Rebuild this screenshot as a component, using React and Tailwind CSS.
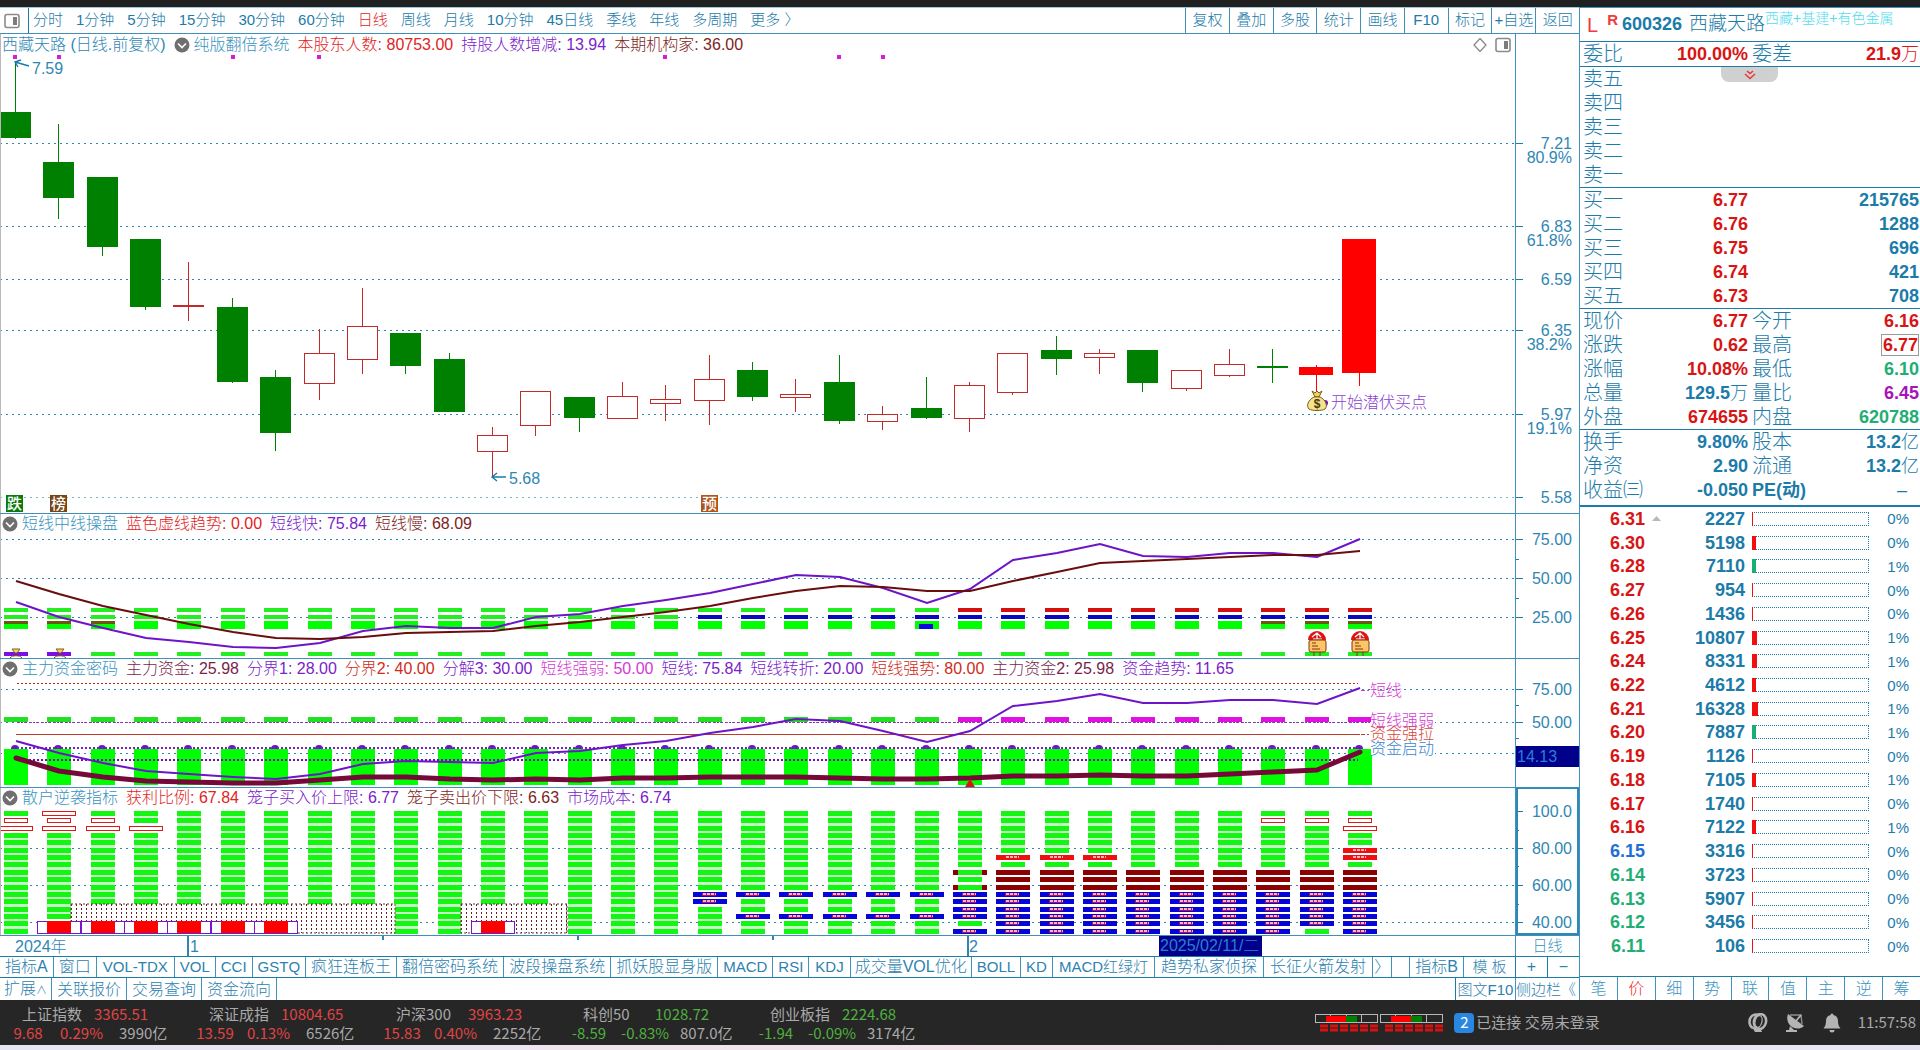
import React from "react";

const STEP = 43.36;
const cx = (i) => Math.round(15 + i * STEP);

const G = "#008000";
const R = "#ff0000";
const HOLLOW = "#c42a2a";
const AXIS = "#1b7ba9";

/* kind, high, body top, body bottom, low */
const CANDLES = [
  ["g", 63, 112, 138, 139],
  ["g", 124, 162, 198, 219],
  ["g", 177, 177, 247, 256],
  ["g", 239, 239, 307, 310],
  ["h", 262, 305, 307, 321],
  ["g", 298, 307, 382, 383],
  ["g", 370, 377, 433, 451],
  ["h", 329, 353, 383, 400],
  ["h", 288, 326, 359, 374],
  ["g", 333, 333, 366, 374],
  ["g", 353, 359, 412, 412],
  ["h", 427, 435, 451, 477],
  ["h", 391, 391, 425, 436],
  ["g", 397, 397, 418, 432],
  ["h", 382, 396, 418, 418],
  ["h", 385, 399, 403, 421],
  ["h", 355, 379, 400, 425],
  ["g", 362, 370, 397, 401],
  ["h", 379, 394, 397, 412],
  ["g", 355, 382, 421, 424],
  ["h", 406, 414, 421, 430],
  ["g", 377, 408, 418, 419],
  ["h", 382, 385, 418, 432],
  ["h", 353, 353, 392, 395],
  ["g", 336, 350, 359, 375],
  ["h", 349, 353, 357, 374],
  ["g", 350, 350, 383, 392],
  ["h", 370, 370, 388, 391],
  ["h", 349, 364, 375, 377],
  ["g", 349, 366, 368, 383],
  ["r", 365, 367, 375, 392],
  ["r", 239, 239, 373, 386],
];

const FAST = [602, 617, 628, 638, 642, 647, 648, 643, 631, 626, 628, 628, 617, 614, 606, 600, 593, 584, 575, 577, 588, 603, 589, 560, 553, 544, 556, 557, 553, 553, 557, 539];
const SLOW = [581, 594, 606, 615, 624, 632, 638, 639, 637, 633, 632, 631, 626, 622, 617, 612, 606, 598, 591, 586, 587, 591, 591, 581, 572, 563, 561, 559, 557, 555, 555, 551];
const SHORT = [741, 753, 763, 771, 774, 777, 779, 774, 764, 761, 762, 763, 753, 751, 745, 741, 733, 727, 719, 721, 731, 742, 731, 706, 701, 694, 703, 703, 700, 700, 704, 688];
const FUND = [758, 771, 777, 781, 782, 783, 783, 780, 777, 777, 779, 780, 779, 780, 778, 778, 777, 777, 777, 778, 779, 779, 778, 776, 776, 775, 776, 776, 774, 772, 770, 752];

const line = (ys) => ys.map((y, i) => `${cx(i) + 1},${y}`).join(" ");
const all = CANDLES.map((_, i) => i);

function Grid({ ys, pale }) {
  return ys.map((y) => (
    <line key={y} x1="0" x2="100%" y1={y} y2={y} stroke={y === pale ? "#7fb5c9" : "#2f86b3"} strokeWidth="1" strokeDasharray="2 4" shapeRendering="crispEdges" transform="translate(0 0.5)" />
  ));
}

function Header({ title, items, prefix, children }) {
  return (
    <div className={`flex h-5 shrink-0 items-center gap-2 whitespace-nowrap text-base leading-5 ${prefix ? "pt-0.5" : ""}`}>
      {prefix ? <span className="ml-px">{prefix}</span> : null}
      <button aria-label={`${title} 菜单`} className={prefix ? "-mr-1 flex" : "-mr-1 flex pl-px"}>
        <svg width="16" height="16" viewBox="0 0 16 16">
          <circle cx="8" cy="8" r="7.5" fill="#6f6f6f" />
          <path d="M4 6.5 L8 10.5 L12 6.5" fill="none" stroke="#fff" strokeWidth="1.6" />
        </svg>
      </button>
      <span className="text-[#3a93bd]">{title}</span>
      {items.map(([t, v, c]) => (
        <span key={t} className={c}>{t}: {v}</span>
      ))}
      {children}
    </div>
  );
}

function Axis({ y0, ticks, minor = [], children }) {
  return (
    <svg className="h-full w-16 shrink-0 border-l border-[#3f93bd]" aria-hidden="true">
      <g transform={`translate(0 ${-y0})`} fill={AXIS} fontSize="16">
        {ticks.map(([y, t, p]) => (
          <g key={y}>
            <rect x="0" y={y} width="7" height="1" />
            <text x="56" y={y + 6} textAnchor="end" fill="#2f86b3">{t}</text>
            {p ? <text x="56" y={y + 20} textAnchor="end" fill="#2f86b3">{p}</text> : null}
          </g>
        ))}
        {minor.map((y) => <rect key={y} x="0" y={y} width="3" height="1" />)}
        {children}
      </g>
    </svg>
  );
}

function Pane({ y0, height, head, axis, children }) {
  return (
    <section className={`flex shrink-0 border-b border-[#3f8fb8] ${height}`}>
      <div className="flex min-w-0 flex-1 flex-col overflow-hidden border-l border-[#b9b9b9]">
        {head}
        <svg className="w-full flex-1" role="img" aria-label="chart">
          <g transform={`translate(-1 ${-(y0 + 20)})`}>{children}</g>
        </svg>
      </div>
      {axis}
    </section>
  );
}

function Tag({ x, t, fill }) {
  return (
    <g>
      <rect x={x} y="495" width="17" height="17" fill={fill} />
      <text x={x + 1} y="509" fontSize="15" fill="#fff" className="font-medium">{t}</text>
    </g>
  );
}

function PanelIcon() {
  return (
    <svg width="16" height="16" viewBox="0 0 16 16">
      <rect x="1" y="1.5" width="14" height="13" rx="2" fill="#fff" stroke="#8a8a8a" strokeWidth="1.6" />
      <rect x="9" y="4" width="4" height="8" fill="#7c7c7c" />
    </svg>
  );
}

function MainChart() {
  return (
    <Pane
      y0={34}
      height="h-[480px]"
      head={
        <Header
          prefix={<span className="text-[#2f86b3]">西藏天路 (日线.前复权)</span>}
          title="纯版翻倍系统"
          items={[
            ["本股东人数", "80753.00", "text-[#e02424]"],
            ["持股人数增减", "13.94", "text-[#7a22c9]"],
            ["本期机构家", "36.00", "text-[#7d2323]"],
          ]}
        >
          <span className="ml-auto mr-1 flex items-center gap-2">
            <button aria-label="标注" className="flex">
              <svg width="14" height="14" viewBox="0 0 14 14"><path d="M7 0.5 L13 7 L7 13.5 L1 7 Z" fill="none" stroke="#8a8a8a" strokeWidth="1.3" /></svg>
            </button>
            <button aria-label="侧栏" className="flex"><PanelIcon /></button>
          </span>
        </Header>
      }
      axis={
        <Axis
          y0={34}
          ticks={[[143, "7.21", "80.9%"], [226, "6.83", "61.8%"], [279, "6.59"], [330, "6.35", "38.2%"], [414, "5.97", "19.1%"], [497, "5.58"]]}
        />
      }
    >
      <Grid ys={[143, 226, 279, 330, 414, 497]} pale={497} />
      {[14, 58, 232, 318, 664, 838, 882].map((x) => <rect key={x} x={x - 1} y="55" width="4" height="4" fill="#d81bd8" />)}
      {CANDLES.map(([k, hi, t, b, lo], i) => {
        const x = cx(i);
        const c = k === "g" ? G : k === "r" ? R : HOLLOW;
        const w = k === "r" ? 34 : 31;
        return (
          <g key={i} shapeRendering="crispEdges">
            <rect x={x} y={hi} width="1" height={lo - hi} fill={c} />
            {k === "h" && b - t > 2 ? (
              <rect x={x - 15} y={t} width="30" height={b - t} fill="#fff" stroke={c} strokeWidth="1" />
            ) : (
              <rect x={x - (w >> 1)} y={t} width={w} height={b - t} fill={c} />
            )}
          </g>
        );
      })}
      <g fill="none" stroke="#1b7ba9" strokeWidth="1.4">
        <path d="M29 66 L15 62 M21 60 L15 62 L18 67" />
        <path d="M506 477 H492 M497 473 L492 477 L497 481" />
      </g>
      <text x="32" y="74" fontSize="16" fill="#2f86b3">7.59</text>
      <text x="509" y="484" fontSize="16" fill="#2f86b3">5.68</text>
      <circle cx="1325" cy="403" r="3" fill="#6a12c4" />
      <g stroke="#7a5a16" strokeWidth="1">
        <path d="M1312 391 L1315 393 L1317 391 L1319 393 L1322 391 L1319 397 H1315 Z" fill="#f3d35a" />
        <path d="M1314 397 C1308 400 1306 406 1309 409 C1312 411 1322 411 1325 409 C1328 406 1326 400 1320 397 Z" fill="#f3e48a" />
      </g>
      <text x="1317" y="408" fontSize="12" textAnchor="middle" fill="#4c3608" className="font-bold">$</text>
      <text x="1331" y="408" fontSize="16" fill="#8a3fd0">开始潜伏买点</text>
      <Tag x={6} t="跌" fill="#0b7a0b" />
      <Tag x={50} t="榜" fill="#7a4313" />
      <Tag x={701} t="预" fill="#b0561c" />
    </Pane>
  );
}

function TokenIcon({ x }) {
  return (
    <g>
      <path d={`M${x - 9} 640 A9 9 0 0 1 ${x + 9} 640 Z`} fill="#dd1515" />
      <path d={`M${x - 5} 637 L${x} 633 L${x + 4} 637 M${x - 4} 639 H${x + 5} M${x} 633 V639`} stroke="#fff" strokeWidth="1.2" fill="none" />
      <rect x={x - 8} y="640" width="17" height="12" rx="2" fill="#fdc565" stroke="#7a3b10" strokeWidth="1" />
      <path d={`M${x - 5} 643 H${x - 1} M${x - 5} 646 H${x + 1} M${x - 5} 649 H${x + 3}`} stroke="#7a3b10" strokeWidth="1" />
      <path d={`M${x - 3} 652 V656 M${x + 3} 652 V656`} stroke="#7a3b10" strokeWidth="1" />
    </g>
  );
}

function ShortMidPane() {
  return (
    <Pane
      y0={514}
      height="h-[145px]"
      head={
        <Header
          title="短线中线操盘"
          items={[
            ["蓝色虚线趋势", "0.00", "text-[#e02424]"],
            ["短线快", "75.84", "text-[#7a22c9]"],
            ["短线慢", "68.09", "text-[#7d2323]"],
          ]}
        />
      }
      axis={<Axis y0={514} ticks={[[539, "75.00"], [578, "50.00"], [617, "25.00"]]} minor={[559, 598]} />}
    >
      <Grid ys={[539, 578, 617]} />
      {all.map((i) => {
        const x = cx(i) - 11;
        return (
          <g key={i}>
            <rect x={x} y="608" width="24" height="4" fill={i >= 22 ? "#d61010" : "#22ee22"} />
            <rect x={x} y="615" width="24" height="4" fill={i >= 16 ? "#0808c0" : "#22ee22"} />
            <rect x={x} y="621" width="24" height="8" fill="#00ff00" />
            {i < 3 || i > 28 ? <rect x={x} y="621" width="24" height="3" fill="#6a5a10" /> : null}
            {i === 21 ? <rect x="919" y="624" width="14" height="5" fill="#0808e0" /> : null}
            <rect x={x} y="652" width="24" height="4" fill={i < 2 ? "#7a0fe0" : "#22ee22"} />
          </g>
        );
      })}
      {[16, 60].map((x) => (
        <g key={x} stroke="#8a5a1a" strokeWidth="1" fill="#f3d35a">
          <path d={`M${x - 4} 649 H${x + 4} L${x + 1} 653 H${x - 1} Z`} />
          <path d={`M${x - 6} 658 C${x - 4} 655 ${x + 4} 655 ${x + 6} 658`} fill="none" />
        </g>
      ))}
      <polyline points={line(FAST)} fill="none" stroke="#6d14c8" strokeWidth="2" />
      <polyline points={line(SLOW)} fill="none" stroke="#6a0d0d" strokeWidth="2" />
      <TokenIcon x={1317} />
      <TokenIcon x={1360} />
    </Pane>
  );
}

function FundPane() {
  return (
    <Pane
      y0={659}
      height="h-[129px]"
      head={
        <Header
          title="主力资金密码"
          items={[
            ["主力资金", "25.98", "text-[#7a1f4a]"],
            ["分界1", "28.00", "text-[#7a22c9]"],
            ["分界2", "40.00", "text-[#d02a20]"],
            ["分解3", "30.00", "text-[#7a22c9]"],
            ["短线强弱", "50.00", "text-[#d43ad4]"],
            ["短线", "75.84", "text-[#7a22c9]"],
            ["短线转折", "20.00", "text-[#7a22c9]"],
            ["短线强势", "80.00", "text-[#d02a20]"],
            ["主力资金2", "25.98", "text-[#7a1f4a]"],
            ["资金趋势", "11.65", "text-[#7a22c9]"],
          ]}
        />
      }
      axis={
        <Axis y0={659} ticks={[[689, "75.00"], [722, "50.00"]]} minor={[705, 738]}>
          <rect x="0" y="746" width="64" height="21" fill="#00008b" />
          <text x="1" y="762" fontSize="16" fill="#2a7fd0">14.13</text>
        </Axis>
      }
    >
      <Grid ys={[689, 722, 753]} />
      {all.map((i) => {
        const x = cx(i) - 11;
        return (
          <g key={i}>
            <rect x={x} y="717" width="24" height="5" fill={i >= 22 ? "#e010e0" : "#22e022"} />
            <rect x={x} y="749" width="24" height="36" fill="#00ff00" />
            <path d={`M${x + 7} 749 A4 4 0 0 1 ${x + 15} 749 Z`} fill="#6d14c8" />
          </g>
        );
      })}
      <g strokeWidth="1" strokeDasharray="2 2" shapeRendering="crispEdges">
        <line x1="17" x2="1358" y1="683.5" y2="683.5" stroke="#c02a1a" />
        <line x1="17" x2="1370" y1="722.5" y2="722.5" stroke="#a020b0" />
        <line x1="17" x2="1358" y1="747.5" y2="747.5" stroke="#7a22c9" strokeWidth="2" />
        <line x1="17" x2="1358" y1="759.5" y2="759.5" stroke="#6a10b0" strokeWidth="2" />
      </g>
      <line x1="16" x2="1360" y1="734.5" y2="734.5" stroke="#c0392b" strokeWidth="1" />
      <polyline points={line(SHORT)} fill="none" stroke="#6d14c8" strokeWidth="2" />
      <polyline points={line(FUND)} fill="none" stroke="#750a38" strokeWidth="5" strokeLinejoin="round" strokeLinecap="round" />
      <path d="M965 787 L970 779 L975 787 Z" fill="#e01010" />
      <rect x="1371" y="702" width="64" height="53" fill="#fff" />
      <g strokeDasharray="4 2">
        <line x1="1361" x2="1369" y1="690.5" y2="690.5" stroke="#d43ad4" />
        <line x1="1361" x2="1369" y1="734.5" y2="734.5" stroke="#c0392b" />
      </g>
      <g fontSize="16">
        <text x="1370" y="696" fill="#d43ad4">短线</text>
        <text x="1370" y="726" fill="#d43ad4">短线强弱</text>
        <text x="1370" y="739" fill="#d8443a">资金强拉</text>
        <text x="1370" y="754" fill="#3a86d0">资金启动</text>
      </g>
    </Pane>
  );
}

/* cell codes: g green, n narrow hollow, w wide hollow, b blue, m maroon, s split, r red */
const BASE = "ggggggggggggggggg";
const TALL = "ggggggggmmmbbbbbb";
const STACKS = {
  0: "gnwgggggggggggggg",
  1: "wnwgggggggggggg..",
  2: "gnwgggggggggg....",
  3: "ggwgggggggggg....",
  16: "gggggggggggbbgggg",
  22: "ggggggggsgsbbbbgb",
  29: "gnggggggmmmbbbbbb",
  30: "gnggggggmmmbbbbbg",
  31: "gnwggrrgmmmbbbbbb",
};
const stackOf = (i) => {
  if (STACKS[i]) return STACKS[i];
  if ((i > 3 && i < 9) || i === 11 || i === 12) return "ggggggggggggg....";
  if (i >= 17 && i <= 21) return "gggggggggggbggbgg";
  if (i >= 23 && i <= 25) return "ggggggrgmmmbbbbbb";
  if (i >= 26) return TALL;
  return BASE;
};

function Cell({ code, x, y }) {
  const marks = (
    <path d={`M${x - 6} ${y + 2} H${x + 7}`} stroke="#ffb0b8" strokeWidth="2" strokeDasharray="3 1" />
  );
  if (code === ".") return null;
  if (code === "n") return <rect x={x - 11} y={y} width="23" height="4" fill="#fff" stroke="#e01818" />;
  if (code === "w") return <rect x={x - 16} y={y} width="33" height="4" fill="#fff" stroke="#e01818" />;
  if (code === "m") return <rect x={x - 16} y={y} width="34" height="5" fill="#8b0000" />;
  if (code === "s")
    return (
      <g>
        <rect x={x - 16} y={y} width="34" height="5" fill="#8b0000" />
        <rect x={x - 11} y={y} width="24" height="5" fill="#14f514" />
      </g>
    );
  if (code === "b" || code === "r")
    return (
      <g>
        <rect x={x - 16} y={y} width="34" height="5" fill={code === "b" ? "#0505d8" : "#ee1010"} />
        <rect x={x - 7} y={y + 1} width="14" height="3" fill={code === "b" ? "#b01060" : "#ee1010"} />
        {marks}
      </g>
    );
  return <rect x={x - 11} y={y} width="24" height="5" fill="#14f514" />;
}

function DotField({ x, w }) {
  return <rect x={x} y="904" width={w} height="29" fill="url(#brownDots)" stroke="#6e3434" strokeWidth="1" strokeDasharray="2 2" />;
}

function RetailPane() {
  return (
    <Pane
      y0={788}
      height="h-[148px]"
      head={
        <Header
          title="散户逆袭指标"
          items={[
            ["获利比例", "67.84", "text-[#e02424]"],
            ["笼子买入价上限", "6.77", "text-[#7a22c9]"],
            ["笼子卖出价下限", "6.63", "text-[#7d2323]"],
            ["市场成本", "6.74", "text-[#7a22c9]"],
          ]}
        />
      }
      axis={
        <Axis y0={788} ticks={[[811, "100.0"], [848, "80.00"], [885, "60.00"], [922, "40.00"]]} minor={[830, 866, 904]}>
          <rect x="1" y="788" width="61" height="146" fill="none" stroke="#2c88b5" strokeWidth="2" />
        </Axis>
      }
    >
      <defs>
        <pattern id="brownDots" width="5" height="4" patternUnits="userSpaceOnUse">
          <rect width="5" height="4" fill="#fff" />
          <rect x="1" y="0" width="1" height="2" fill="#5e2020" />
        </pattern>
      </defs>
      <Grid ys={[848, 885, 922]} />
      {all.map((i) => {
        const rows = stackOf(i);
        return (
          <g key={i} shapeRendering="crispEdges">
            {rows.split("").map((c, r) => (
              <g key={r}>
                {c === "g" && rows[r + 1] === "g" ? <rect x={cx(i) - 11} y={Math.round(811 + r * 7.35) + 5} width="24" height="3" fill="#c4f7c4" /> : null}
                <Cell code={c} x={cx(i)} y={Math.round(811 + r * 7.35)} />
              </g>
            ))}
          </g>
        );
      })}
      <DotField x={71} w={324} />
      <DotField x={461} w={106} />
      {[1, 2, 3, 4, 5, 6, 11].map((i) => (
        <g key={i} shapeRendering="crispEdges">
          <rect x={cx(i) - 21} y="921" width="43" height="12" fill="#fff" stroke="#7a14d0" strokeWidth="1" />
          <rect x={cx(i) - 11} y="921" width="24" height="12" fill="#ff0000" />
        </g>
      ))}
    </Pane>
  );
}

const PERIODS = ["分时", "1分钟", "5分钟", "15分钟", "30分钟", "60分钟", "日线", "周线", "月线", "10分钟", "45日线", "季线", "年线", "多周期", "更多 〉"];
const TOOLS = ["复权", "叠加", "多股", "统计", "画线", "F10", "标记", "+自选", "返回"];

function Toolbar() {
  return (
    <nav className="flex h-[27px] shrink-0 items-stretch border-y border-[#3f8fb8] border-t-[#9cc8dd] text-[15px] text-[#1b7ba9]">
      <button aria-label="面板" className="flex w-[29px] items-center border-r border-[#1b7ba9] pl-1"><PanelIcon /></button>
      <div className="flex flex-1 items-center gap-[13px] whitespace-nowrap pl-1">
        {PERIODS.map((p) => (
          <button key={p} className={p === "日线" ? "text-[#e02424]" : ""}>{p}</button>
        ))}
      </div>
      <div className="flex w-[394px]">
        {TOOLS.map((t) => (
          <button key={t} className="flex-1 whitespace-nowrap border-l border-[#3f8fb8]">{t}</button>
        ))}
      </div>
    </nav>
  );
}

function DateRow() {
  return (
    <div className="flex h-[21px] shrink-0 border-b border-[#1b7ba9]">
      <svg className="h-full min-w-0 flex-1" role="img" aria-label="日期">
        <g fill="#2f86b3" fontSize="16">
          <text x="15" y="16">2024年</text>
          <rect x="187" y="0" width="2" height="20" />
          <text x="190" y="16">1</text>
          <rect x="382" y="0" width="2" height="4" />
          <rect x="577" y="0" width="2" height="4" />
          <rect x="772" y="0" width="2" height="4" />
          <rect x="967" y="0" width="2" height="20" />
          <text x="969" y="16">2</text>
          <rect x="1159" y="0" width="103" height="20" fill="#00008b" />
          <text x="1160" y="15" fill="#2a7fd0">2025/02/11/二</text>
        </g>
      </svg>
      <span className="w-16 border-l border-[#3f93bd] text-center text-[15px] leading-5 text-[#3a93bd]">日线</span>
    </div>
  );
}

const LATIN = "px-[5px] text-[15px]";
const LATIN_WIDE = "px-1.5 text-[15px]";
const TABS = [
  ["指标A", "px-[5px]"], ["窗口", "px-[5px]"], ["VOL-TDX", LATIN_WIDE], ["VOL", LATIN], ["CCI", LATIN], ["GSTQ", LATIN],
  ["疯狂连板王", "px-[5px]"], ["翻倍密码系统", "px-[5px]"], ["波段操盘系统", "px-[5px]"], ["抓妖股显身版", "px-[5px]"],
  ["MACD", LATIN], ["RSI", LATIN], ["KDJ", LATIN_WIDE], ["成交量VOL优化", "px-1"], ["BOLL", LATIN], ["KD", LATIN],
  ["MACD红绿灯", LATIN_WIDE], ["趋势私家侦探", "px-1.5"], ["长征火箭发射", "px-1.5"], ["〉", "px-px"],
];
const LINKS = ["关联报价", "交易查询", "资金流向"];

function BottomTabs() {
  return (
    <div className="flex min-h-0 flex-1 flex-col whitespace-nowrap text-base text-[#2c82ae]">
      <div className="flex h-[21px] shrink-0 border-b border-[#1b7ba9] leading-5">
        {TABS.map(([t, pad]) => (
          <button key={t} className={`border-r border-[#3f93bd] ${pad}`}>{t}</button>
        ))}
        <span className="ml-auto" />
        <button className="w-[54px] border-l border-[#3f93bd]">指标B</button>
        <button className="w-[52px] border-l border-[#3f93bd] text-[15px]">模 板</button>
        <button aria-label="放大" className="w-8 border-l border-[#1b7ba9]">+</button>
        <button aria-label="缩小" className="w-8 border-l border-[#1b7ba9]">−</button>
      </div>
      <div className="flex flex-1 leading-[22px]">
        <button className="border-r border-[#3f93bd] px-1">扩展<span className="text-[11px]">∧</span></button>
        {LINKS.map((t) => (
          <button key={t} className="border-r border-[#3f93bd] px-[5px]">{t}</button>
        ))}
        <span className="ml-auto" />
        <button className="w-[60px] border-l border-[#1b7ba9] text-[15px]">图文F10</button>
        <button className="w-16 overflow-hidden border-l border-[#3f93bd] text-left text-[15px]">侧边栏《</button>
      </div>
    </div>
  );
}

const RED = "text-[#d81414]";
const BLUE = "text-[#1b7ba9]";
const GREEN = "text-[#1fae74]";

function Quote({ rows }) {
  return (
    <table className="w-full table-fixed border-t border-[#1b7ba9] text-lg font-bold">
      <colgroup>
        <col className="w-[74px]" />
        <col className="w-[98px]" />
        <col className="w-[70px]" />
        <col />
      </colgroup>
      <tbody>
        {rows.map(([a, av, ac, b, bv, bc, box]) => (
          <tr key={a} className="h-6 whitespace-nowrap leading-6">
            <th scope="row" className="p-0 pl-[3px] text-left text-xl font-light text-[#1b7ba9]"><span className="block h-6 leading-6">{a}</span></th>
            <td className={`p-0 pr-1 text-right ${ac}`}>{av}</td>
            <th scope="row" className={`p-0 text-left text-[#1b7ba9] ${b === "PE(动)" ? "text-lg" : "text-xl font-light"}`}><span className="block h-6 leading-6">{b}</span></th>
            <td className={`p-0 pr-px text-right ${bc}`}>
              {box ? <span className="inline-block border border-[#9a9a9a] pl-px leading-5">{bv}</span> : bv}
            </td>
          </tr>
        ))}
      </tbody>
    </table>
  );
}

const SELL = ["卖五", "卖四", "卖三", "卖二", "卖一"].map((a) => [a, "", RED, "", "", BLUE]);
const BUY = [["买一", "6.77", "215765"], ["买二", "6.76", "1288"], ["买三", "6.75", "696"], ["买四", "6.74", "421"], ["买五", "6.73", "708"]].map(([a, p, v]) => [a, p, RED, "", v, BLUE]);
const unit = (n, u) => <>{n}<span className="font-light">{u}</span></>;

const LEVELS = [
  ["6.31", 2227, 0, 1], ["6.30", 5198, 0, 4], ["6.28", 7110, 1, 4, 1], ["6.27", 954, 0, 1], ["6.26", 1436, 0, 1],
  ["6.25", 10807, 1, 5], ["6.24", 8331, 1, 5], ["6.22", 4612, 0, 4], ["6.21", 16328, 1, 6], ["6.20", 7887, 1, 4, 1],
  ["6.19", 1126, 0, 1], ["6.18", 7105, 1, 4], ["6.17", 1740, 0, 1], ["6.16", 7122, 1, 4], ["6.15", 3316, 0, 1],
  ["6.14", 3723, 0, 1], ["6.13", 5907, 0, 1], ["6.12", 3456, 0, 1], ["6.11", 106, 0, 1],
];

function SidePanel() {
  return (
    <aside className="flex w-[341px] shrink-0 flex-col border-l border-t border-[#3f93bd]">
      <header className="flex h-[33px] shrink-0 whitespace-nowrap text-[#1b7ba9]">
        <span className="pl-[7px] pt-[5px] text-xl leading-6 text-[#ee3b3b]">L</span>
        <span className="pl-[9px] text-[15px] font-bold leading-6 text-[#ee3b3b]">R</span>
        <h1 className="flex pl-1 pt-1 text-lg leading-6">
          <span className="font-bold">600326</span>
          <span className="pl-[7px] text-[19px]">西藏天路</span>
        </h1>
        <span className="text-[14px] leading-5 text-[#52dcec]">西藏+基建+有色金属</span>
      </header>
      <Quote rows={[["委比", "100.00%", RED, "委差", unit("21.9", "万"), RED]]} />
      <div className="relative">
        <Quote rows={SELL} />
        <button aria-label="展开" className="absolute left-[141px] top-px flex h-[15px] w-[57px] items-center justify-center rounded-b-lg bg-[#d0d0d0]">
          <svg width="14" height="10" viewBox="0 0 14 10" fill="none" stroke="#e63a3a" strokeWidth="1.6"><path d="M4 1 L7 3.5 L10 1" /><path d="M2 4 L7 8.5 L12 4" /></svg>
        </button>
      </div>
      <Quote rows={BUY} />
      <Quote
        rows={[
          ["现价", "6.77", RED, "今开", "6.16", RED],
          ["涨跌", "0.62", RED, "最高", "6.77", RED, true],
          ["涨幅", "10.08%", RED, "最低", "6.10", GREEN],
          ["总量", unit("129.5", "万"), BLUE, "量比", "6.45", "text-[#a813b8]"],
          ["外盘", "674655", RED, "内盘", "620788", GREEN],
        ]}
      />
      <Quote
        rows={[
          ["换手", "9.80%", BLUE, "股本", unit("13.2", "亿"), BLUE],
          ["净资", "2.90", BLUE, "流通", unit("13.2", "亿"), BLUE],
          ["收益㈢", "-0.050", BLUE, "PE(动)", <span className="pr-3 font-normal">–</span>, BLUE],
        ]}
      />
      <div className="mt-[3px] flex min-h-0 flex-1 flex-col border-t-2 border-[#1b7ba9] pb-[18px]">
        {LEVELS.map(([p, v, pct, w, g], i) => (
          <div key={p} className="flex flex-1 items-center text-lg font-bold leading-none text-[#1b7ba9]">
            <span className={`w-[65px] text-right ${p === "6.15" ? "text-[#1f6fd6]" : p < "6.15" ? GREEN : RED}`}>{p}</span>
            <span className="flex w-4 justify-end">
              {i === 0 ? <svg width="9" height="5" viewBox="0 0 9 5"><path d="M0 5 L4.5 0 L9 5 Z" fill="#b8b8b8" /></svg> : null}
            </span>
            <span className="w-[84px] text-right">{v}</span>
            <span className="ml-[7px] flex h-[14px] w-[117px] border border-l-0 border-dotted border-[#1b7ba9]">
              <span className={g ? "-my-px bg-[#18b070]" : "-my-px bg-[#f01010]"} style={{ width: w }} />
            </span>
            <span className="flex-1 pr-[11px] text-right text-[15px] font-normal leading-none">{pct}%</span>
          </div>
        ))}
      </div>
      <nav className="flex h-6 shrink-0 border-t border-[#1b7ba9] text-base text-[#3a93bd]">
        {["笔", "价", "细", "势", "联", "值", "主", "逆", "筹"].map((t) => (
          <button key={t} className={`flex-1 border-r border-[#3f93bd] last:border-r-0 ${t === "价" ? "text-[#ee2b2b]" : ""}`}>{t}</button>
        ))}
      </nav>
    </aside>
  );
}

const UP = "text-[#e04444]";
const DOWN = "text-[#4fb03f]";
const INDEXES = [
  ["上证指数", "3365.51", "9.68", "0.29%", "3990亿", UP],
  ["深证成指", "10804.65", "13.59", "0.13%", "6526亿", UP],
  ["沪深300", "3963.23", "15.83", "0.40%", "2252亿", UP],
  ["科创50", "1028.72", "-8.59", "-0.83%", "807.0亿", DOWN],
  ["创业板指", "2224.68", "-1.94", "-0.09%", "3174亿", DOWN],
];

function Meter() {
  return (
    <svg width="63" height="18" viewBox="0 0 63 18">
      <rect x="0.5" y="0.5" width="62" height="8" fill="#262626" stroke="#b8b8b8" />
      <path d="M15.5 0 V9 M31.5 0 V9 M46.5 0 V9" stroke="#b8b8b8" />
      <rect x="11" y="2" width="20" height="6" fill="#ff0000" />
      <rect x="31" y="2" width="11" height="6" fill="#008000" />
      <path d="M5 12 H63 M5 16 H63" stroke="#d81010" strokeWidth="3" strokeDasharray="8 2" />
    </svg>
  );
}

function StatusBar() {
  return (
    <footer className="flex h-[45px] shrink-0 items-center whitespace-nowrap bg-[#262626] font-['Noto_Sans_CJK_SC',sans-serif] text-[15px] font-normal text-[#a9a9a9]">
      {INDEXES.map(([n, v, d, p, a, c]) => (
        <div key={n} className="w-[187px] leading-[19px]">
          <div className="flex pl-[22px]">
            <span className="w-[72px]">{n}</span>
            <span className={c}>{v}</span>
          </div>
          <div className="flex">
            <span className={`w-14 text-center ${c}`}>{d}</span>
            <span className={`w-[63px] pl-1 ${c}`}>{p}</span>
            <span>{a}</span>
          </div>
        </div>
      ))}
      <div className="ml-auto flex items-center">
        <span className="flex gap-0.5"><Meter /><Meter /></span>
        <span className="ml-[11px] flex size-5 items-center justify-center rounded-sm bg-[#2a86df] text-white">2</span>
        <span className="ml-0.5">已连接 交易未登录</span>
        <div className="ml-[148px] flex items-center gap-[17px]">
          <button aria-label="客服" className="flex">
            <svg width="20" height="20" viewBox="0 0 20 20" fill="none" stroke="#b4b4b4">
              <path d="M11 2 C5 0 1.5 4 1.5 9 C1.5 12 3 14 5 15" strokeWidth="2.6" />
              <ellipse cx="12" cy="8.5" rx="6" ry="7.5" strokeWidth="2.6" transform="rotate(14 12 8.5)" />
              <ellipse cx="10.5" cy="8.5" rx="3.4" ry="6" strokeWidth="1.2" transform="rotate(14 10.5 8.5)" />
              <path d="M4 14 L12 14.5 L14 19 H7 Z" fill="#b4b4b4" stroke="none" />
            </svg>
          </button>
          <button aria-label="行情连接" className="flex">
            <svg width="20" height="20" viewBox="0 0 20 20" fill="#b4b4b4">
              <path d="M3 1 C1 6 3 12 8 14.5 C12 16.5 17 15.5 19 13 Z" />
              <path d="M5 2 L16 2 L17 11" stroke="#8e8e8e" strokeWidth="1.4" fill="none" />
              <path d="M11 8 L16 2" stroke="#b4b4b4" strokeWidth="1.8" fill="none" />
              <path d="M5 13 L9 17 H12 V19 H1 V17 H4 Z" />
            </svg>
          </button>
          <button aria-label="消息" className="flex">
            <svg width="20" height="20" viewBox="0 0 20 20" fill="#b4b4b4">
              <path d="M10 0.5 C10.8 0.5 11.4 1.1 11.4 2 C14.5 2.7 16 5 16 8 C16 12 17 13.5 18.5 15.5 H1.5 C3 13.5 4 12 4 8 C4 5 5.5 2.7 8.6 2 C8.6 1.1 9.2 0.5 10 0.5 Z" />
              <path d="M7.5 17 H12.5 A2.5 2.5 0 0 1 7.5 17 Z" />
            </svg>
          </button>
        </div>
        <time className="ml-4 mr-1">11:57:58</time>
      </div>
    </footer>
  );
}

export default function App() {
  return (
    <div className="flex h-screen min-h-[1050px] flex-col overflow-hidden bg-white font-['Liberation_Sans','Noto_Sans_CJK_SC',sans-serif] font-light">
      <div className="h-[7px] shrink-0 bg-[#202020]" />
      <div className="flex min-h-0 flex-1">
        <main className="flex min-w-0 flex-1 flex-col">
          <Toolbar />
          <MainChart />
          <ShortMidPane />
          <FundPane />
          <RetailPane />
          <DateRow />
          <BottomTabs />
        </main>
        <SidePanel />
      </div>
      <StatusBar />
      <div className="h-[5px] shrink-0 bg-gradient-to-r from-[#e6e6f2] via-[#f3e4ec] to-[#e6e6f2]" />
    </div>
  );
}
